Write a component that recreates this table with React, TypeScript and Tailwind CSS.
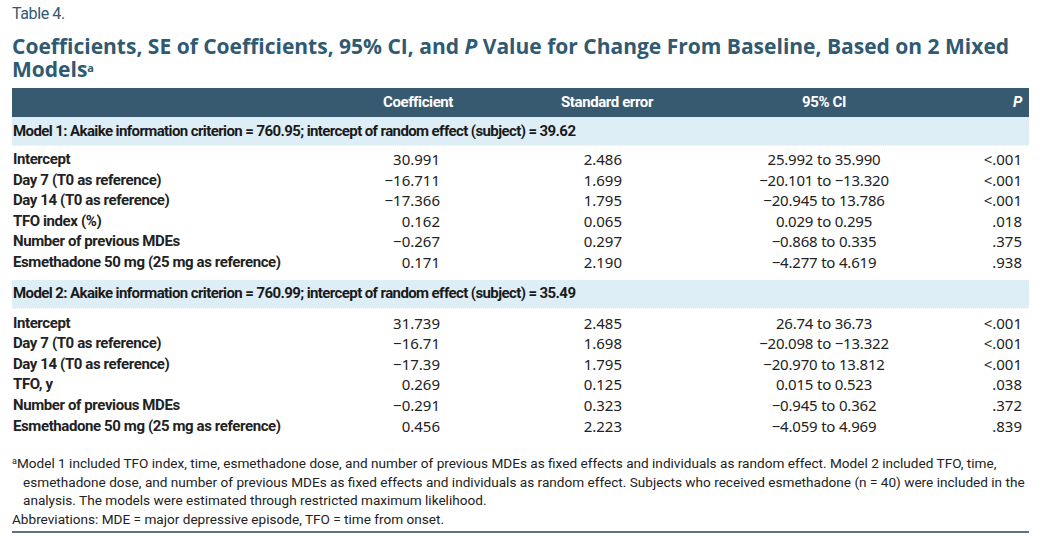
const COND = "font-['Roboto',sans-serif] tracking-[-0.4px]";
const NUM = "font-['Noto_Sans',sans-serif] [font-stretch:87.5%]";
const BODY = "font-['Roboto',sans-serif]";

type Row = { label: string; coef: string; se: string; ci: string; p: string };

const MODEL_1: Row[] = [
  { label: "Intercept", coef: "30.991", se: "2.486", ci: "25.992 to 35.990", p: "<.001" },
  { label: "Day 7 (T0 as reference)", coef: "−16.711", se: "1.699", ci: "−20.101 to −13.320", p: "<.001" },
  { label: "Day 14 (T0 as reference)", coef: "−17.366", se: "1.795", ci: "−20.945 to 13.786", p: "<.001" },
  { label: "TFO index (%)", coef: "0.162", se: "0.065", ci: "0.029 to 0.295", p: ".018" },
  { label: "Number of previous MDEs", coef: "−0.267", se: "0.297", ci: "−0.868 to 0.335", p: ".375" },
  { label: "Esmethadone 50 mg (25 mg as reference)", coef: "0.171", se: "2.190", ci: "−4.277 to 4.619", p: ".938" },
];

const MODEL_2: Row[] = [
  { label: "Intercept", coef: "31.739", se: "2.485", ci: "26.74 to 36.73", p: "<.001" },
  { label: "Day 7 (T0 as reference)", coef: "−16.71", se: "1.698", ci: "−20.098 to −13.322", p: "<.001" },
  { label: "Day 14 (T0 as reference)", coef: "−17.39", se: "1.795", ci: "−20.970 to 13.812", p: "<.001" },
  { label: "TFO, y", coef: "0.269", se: "0.125", ci: "0.015 to 0.523", p: ".038" },
  { label: "Number of previous MDEs", coef: "−0.291", se: "0.323", ci: "−0.945 to 0.362", p: ".372" },
  { label: "Esmethadone 50 mg (25 mg as reference)", coef: "0.456", se: "2.223", ci: "−4.059 to 4.969", p: ".839" },
];

const GRID = "grid grid-cols-[316px_180px_198px_218px_1fr]";

function Band({ children }: { children: React.ReactNode }) {
  return (
    <div
      className={`${COND} flex h-[29px] items-center whitespace-nowrap border-b border-dotted border-white bg-[#deeef7] px-px text-[15px] font-bold tracking-[-0.6px] text-[#1a1a1a]`}
    >
      {children}
    </div>
  );
}

function DataRows({ rows }: { rows: Row[] }) {
  return (
    <div>
      {rows.map((r) => (
        <div key={r.label} className={`${GRID} h-[20.6px] items-center whitespace-nowrap text-[#222]`}>
          <span className={`${COND} pl-px text-[15px] font-bold`}>{r.label}</span>
          <span className={`${NUM} pr-[68px] text-right text-[15px]`}>{r.coef}</span>
          <span className={`${NUM} pr-[84px] text-right text-[15px]`}>{r.se}</span>
          <span className={`${NUM} pl-[18px] text-center text-[15px] tracking-[-0.2px]`}>{r.ci}</span>
          <span className={`${NUM} pr-[7px] text-right text-[15px]`}>{r.p}</span>
        </div>
      ))}
    </div>
  );
}

export default function App() {
  return (
    <div className="h-[543px] w-[1042px] overflow-hidden bg-white px-[12px] pt-[4px] text-[#222]">
      <div className={`${COND} text-[16px] leading-[20px] text-[#2f5a72]`}>Table 4.</div>
      <h1 className="mt-[11px] font-['Open_Sans',sans-serif] text-[21px] font-bold leading-[23px] text-[#2f5a72]">
        Coefficients, SE of Coefficients, 95% CI, and <i>P</i> Value for Change From Baseline, Based on 2 Mixed
        <br />
        Models<sup className="text-[11px] font-bold leading-none">a</sup>
      </h1>

      <div className="mt-[7px] w-[1017px]">
        <div className={`${GRID} ${COND} h-[29px] items-center bg-[#385a70] text-[15px] font-bold text-white`}>
          <span />
          <span className="text-center">Coefficient</span>
          <span className="text-center">Standard error</span>
          <span className="pl-[18px] text-center">95% CI</span>
          <span className="pr-[7px] text-right italic">P</span>
        </div>

        <Band>Model 1: Akaike information criterion = 760.95; intercept of random effect (subject) = 39.62</Band>
        <div className="pb-[8px] pt-[2px]">
          <DataRows rows={MODEL_1} />
        </div>
        <Band>Model 2: Akaike information criterion = 760.99; intercept of random effect (subject) = 35.49</Band>
        <div className="pt-[3px]">
          <DataRows rows={MODEL_2} />
        </div>

        <div className={`${BODY} mt-[19px] border-b-2 border-[#5b7385] pb-[3px] text-[13.6px] leading-[18.5px] text-[#222]`}>
          <p className="whitespace-nowrap pl-[11px] -indent-[11px]">
            <sup className="text-[9px] leading-none">a</sup>Model 1 included TFO index, time, esmethadone dose, and number of
            previous MDEs as fixed effects and individuals as random effect. Model 2 included TFO, time,
            <br />
            esmethadone dose, and number of previous MDEs as fixed effects and individuals as random effect. Subjects who
            received esmethadone (n = 40) were included in the
            <br />
            analysis. The models were estimated through restricted maximum likelihood.
          </p>
          <p>Abbreviations: MDE = major depressive episode, TFO = time from onset.</p>
        </div>
      </div>
    </div>
  );
}
